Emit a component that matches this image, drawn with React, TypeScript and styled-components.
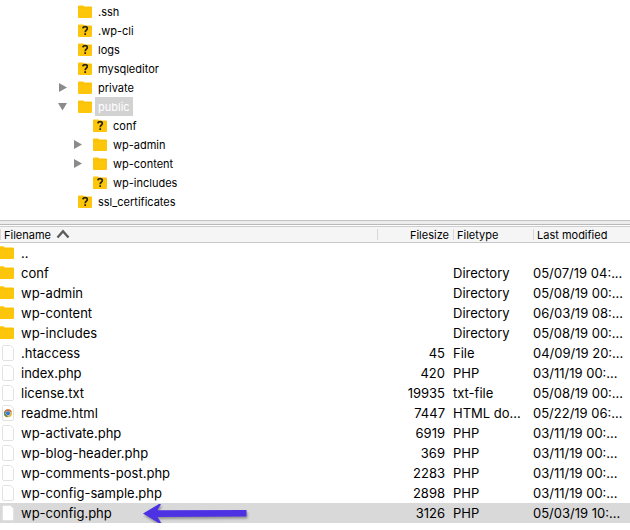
import React from "react";
import styled, { createGlobalStyle } from "styled-components";

const GlobalStyle = createGlobalStyle`
  * { box-sizing: border-box; }
  body {
    margin: 0;
    background: #fff;
    color: #000;
    font-family: Inter, "Liberation Sans", sans-serif;
    overflow-x: hidden;
  }
`;

const Page = styled.main`
  display: flex;
  flex-direction: column;
`;

const TreePane = styled.nav`
  padding: 2px 0 9px;
`;

const TreeList = styled.ul`
  list-style: none;
  margin: 0;
  padding: 0;
`;

const TreeRow = styled.div<{ $level: number }>`
  display: grid;
  grid-template-columns: 20px 17px auto;
  justify-content: start;
  align-items: center;
  height: 19px;
  padding-left: ${(p) => 58 + p.$level * 15}px;
  font-size: 11px;
`;

const Toggle = styled.button`
  display: flex;
  width: 10px;
  height: 10px;
  padding: 0;
  border: 0;
  background: none;
`;

const TreeLabel = styled.span<{ $selected: boolean }>`
  padding: 2px 3px 0;
  line-height: 17px;
  color: ${(p) => (p.$selected ? "#fff" : "inherit")};
  background: ${(p) => (p.$selected ? "#d2d2d2" : "transparent")};
`;

const Splitter = styled.div`
  height: 7px;
  border-top: 1px solid #c2c2c2;
  border-bottom: 1px solid #cdcdcd;
  background: linear-gradient(#ececec 0 3px, #b9b9b9 3px 4px, #fff 4px);
`;

const Table = styled.table`
  width: 100%;
  table-layout: fixed;
  border-collapse: separate;
  border-spacing: 0;
`;

const SizeCol = styled.col`
  width: 12%;
`;

const TypeCol = styled.col`
  width: 80px;
`;

const DateCol = styled.col`
  width: 97px;
`;

const HeadCell = styled.th<{ $right?: boolean }>`
  height: 16px;
  padding: 2px 4px 0;
  border-bottom: 1px solid #c8c8c8;
  background: linear-gradient(#d8d8d8, #d8d8d8) left center / 1px 11px no-repeat #f5f5f5;
  font-size: 11px;
  font-weight: 400;
  line-height: 13px;
  text-align: ${(p) => (p.$right ? "right" : "left")};
  white-space: nowrap;
`;

const HeadLabel = styled.span`
  display: flex;
  align-items: flex-start;
  gap: 5px;
`;

const Row = styled.tr<{ $selected: boolean }>`
  background: ${(p) => (p.$selected ? "#d9d9d9" : "#fff")};
`;

const Cell = styled.td<{ $right?: boolean }>`
  height: 20px;
  padding: 0 ${(p) => (p.$right ? 8 : 0)}px 0 0;
  font-size: 13px;
  line-height: 20px;
  text-align: ${(p) => (p.$right ? "right" : "left")};
  white-space: nowrap;
`;

const NameBox = styled.div`
  display: flex;
  align-items: center;
  gap: 7px;
  position: relative;
`;

const FileIcon = styled.svg`
  flex: none;
  width: 14px;
  height: 18px;
`;

const Pointer = styled.svg`
  position: absolute;
  left: 142px;
  top: 0;
  width: 108px;
  height: 22px;
  filter: drop-shadow(1px 2px 1px #0005);
`;

const folderPath = "M0 1.6Q0 .4 1 .4H5L6.5 1.4H13Q14 1.4 14 2.4V12Q14 13 13 13H1Q0 13 0 12Z";

function Folder({ unknown = false }: { unknown?: boolean }) {
  return (
    <svg width="14" height="14" viewBox="0 0 14 14" aria-hidden="true">
      <path d={folderPath} fill="#fdc60b" />
      <path d="M0 2.8H14" stroke="#efb805" strokeWidth=".6" />
      {unknown && (
        <g fill="none" stroke="#2b2408" strokeWidth="1.7">
          <path d="M4.9 4.4C5.1 1.9 9.3 2 9.3 4.4C9.3 6.1 7.2 6.1 7.2 8.2" />
          <path d="M7.2 9.2V11" />
        </g>
      )}
    </svg>
  );
}

type Kind = "folder" | "file" | "html";

function EntryIcon({ kind }: { kind: Kind }) {
  if (kind === "folder") {
    return (
      <FileIcon viewBox="0 0 14 18" aria-hidden="true">
        <path d="M0 2.2H3.5L5 3.6H13Q14 3.6 14 4.6V14Q14 15 13 15H0Z" fill="#fdc60b" />
        <path d="M0 5H14" stroke="#efb805" strokeWidth=".6" />
      </FileIcon>
    );
  }
  return (
    <FileIcon viewBox="0 0 14 18" aria-hidden="true">
      <path
        d="M3.5 1.5H10.5L13.5 4.5V15Q13.5 16.5 12 16.5H4Q2.5 16.5 2.5 15V2.5Q2.5 1.5 3.5 1.5Z"
        fill="#fff"
        stroke="#e2e2e2"
      />
      {kind === "html" && (
        <g>
          <circle cx="8" cy="9.3" r="4" fill="#e8b93c" />
          <path d="M8 9.3L4.5 7.3A4 4 0 0 1 11.6 7.4Z" fill="#c9694b" />
          <path d="M8 9.3L4.5 7.3A4 4 0 0 0 7.6 13.3Z" fill="#5b8b5a" />
          <circle cx="8" cy="9.3" r="2.4" fill="#cfdcf0" />
          <circle cx="8" cy="9.3" r="2" fill="#3976cf" />
        </g>
      )}
    </FileIcon>
  );
}

interface Node {
  name: string;
  unknown?: boolean;
  open?: boolean;
  selected?: boolean;
  children?: Node[];
}

const tree: Node[] = [
  { name: ".ssh" },
  { name: ".wp-cli", unknown: true },
  { name: "logs", unknown: true },
  { name: "mysqleditor", unknown: true },
  { name: "private", open: false },
  {
    name: "public",
    open: true,
    selected: true,
    children: [
      { name: "conf", unknown: true },
      { name: "wp-admin", open: false },
      { name: "wp-content", open: false },
      { name: "wp-includes", unknown: true },
    ],
  },
  { name: "ssl_certificates", unknown: true },
];

function Tree({ nodes, level = 0 }: { nodes: Node[]; level?: number }) {
  return (
    <TreeList>
      {nodes.map((n) => (
        <li key={n.name}>
          <TreeRow $level={level}>
            {n.open === undefined ? (
              <span />
            ) : (
              <Toggle type="button" aria-expanded={n.open} aria-label={n.name}>
                <svg width="10" height="10" viewBox="0 0 10 10" aria-hidden="true">
                  <path d={n.open ? "M0 1H9L4.5 8.5Z" : "M1 0L9 4.5L1 9Z"} fill="#8b8b8b" />
                </svg>
              </Toggle>
            )}
            <Folder unknown={n.unknown} />
            <TreeLabel $selected={!!n.selected}>{n.name}</TreeLabel>
          </TreeRow>
          {n.children && <Tree nodes={n.children} level={level + 1} />}
        </li>
      ))}
    </TreeList>
  );
}

const files: [Kind, string, string, string, string][] = [
  ["folder", "..", "", "", ""],
  ["folder", "conf", "", "Directory", "05/07/19 04:..."],
  ["folder", "wp-admin", "", "Directory", "05/08/19 00:..."],
  ["folder", "wp-content", "", "Directory", "06/03/19 08:..."],
  ["folder", "wp-includes", "", "Directory", "05/08/19 00:..."],
  ["file", ".htaccess", "45", "File", "04/09/19 20:..."],
  ["file", "index.php", "420", "PHP", "03/11/19 00:..."],
  ["file", "license.txt", "19935", "txt-file", "05/08/19 00:..."],
  ["html", "readme.html", "7447", "HTML do...", "05/22/19 06:..."],
  ["file", "wp-activate.php", "6919", "PHP", "03/11/19 00:..."],
  ["file", "wp-blog-header.php", "369", "PHP", "03/11/19 00:..."],
  ["file", "wp-comments-post.php", "2283", "PHP", "03/11/19 00:..."],
  ["file", "wp-config-sample.php", "2898", "PHP", "03/11/19 00:..."],
  ["file", "wp-config.php", "3126", "PHP", "05/03/19 10:..."],
];

const selectedFile = "wp-config.php";

export default function App() {
  return (
    <Page>
      <GlobalStyle />
      <TreePane aria-label="Remote directories">
        <Tree nodes={tree} />
      </TreePane>
      <Splitter />
      <Table>
        <colgroup>
          <col />
          <SizeCol />
          <TypeCol />
          <DateCol />
        </colgroup>
        <thead>
          <tr>
            <HeadCell scope="col" aria-sort="ascending">
              <HeadLabel>
                Filename
                <svg width="14" height="10" viewBox="0 0 14 10" aria-hidden="true">
                  <path d="M1.5 8.5L7 2.2L12.5 8.5" fill="none" stroke="#5c5c5c" strokeWidth="2.4" />
                </svg>
              </HeadLabel>
            </HeadCell>
            <HeadCell scope="col" $right>Filesize</HeadCell>
            <HeadCell scope="col">Filetype</HeadCell>
            <HeadCell scope="col">Last modified</HeadCell>
          </tr>
        </thead>
        <tbody>
          {files.map(([kind, name, size, type, date]) => (
            <Row key={name} $selected={name === selectedFile}>
              <Cell>
                <NameBox>
                  <EntryIcon kind={kind} />
                  {name}
                  {name === selectedFile && (
                    <Pointer viewBox="0 0 108 22" aria-hidden="true">
                      <path
                        d="M1 10.5L17 1H19L15.5 7.3L104.5 7V13.5L15.5 14L19.5 20.5H17.5Z"
                        fill="#4d32e4"
                      />
                    </Pointer>
                  )}
                </NameBox>
              </Cell>
              <Cell $right>{size}</Cell>
              <Cell>{type}</Cell>
              <Cell>{date}</Cell>
            </Row>
          ))}
        </tbody>
      </Table>
    </Page>
  );
}
